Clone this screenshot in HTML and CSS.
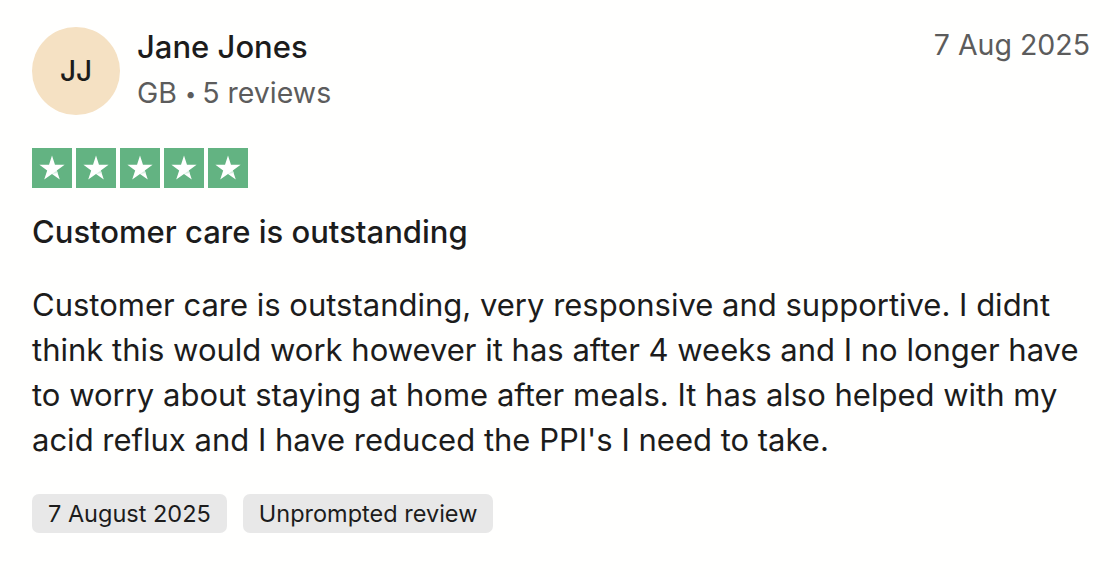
FILE: index.html
```html
<!DOCTYPE html>
<html lang="en">
<head>
<meta charset="utf-8">
<title>Review</title>
<link rel="stylesheet" href="styles.css">
</head>
<body>
<article class="review">
  <header class="head">
    <div class="avatar">JJ</div>
    <div class="who">
      <div class="name">Jane Jones</div>
      <div class="meta">GB<span class="dot">•</span>5 reviews</div>
    </div>
    <time class="date">7 Aug 2025</time>
  </header>
  <div class="stars">
    <span class="star"><svg viewBox="0 0 24 24"><path d="M12 3.2l2.1 6.5h6.8l-5.5 4 2.1 6.5L12 16.2l-5.5 4 2.1-6.5-5.5-4h6.8z"/><path class="notch" d="M15.4 13.7l0.6 1.9L12 16.2z"/></svg></span>
    <span class="star"><svg viewBox="0 0 24 24"><path d="M12 3.2l2.1 6.5h6.8l-5.5 4 2.1 6.5L12 16.2l-5.5 4 2.1-6.5-5.5-4h6.8z"/><path class="notch" d="M15.4 13.7l0.6 1.9L12 16.2z"/></svg></span>
    <span class="star"><svg viewBox="0 0 24 24"><path d="M12 3.2l2.1 6.5h6.8l-5.5 4 2.1 6.5L12 16.2l-5.5 4 2.1-6.5-5.5-4h6.8z"/><path class="notch" d="M15.4 13.7l0.6 1.9L12 16.2z"/></svg></span>
    <span class="star"><svg viewBox="0 0 24 24"><path d="M12 3.2l2.1 6.5h6.8l-5.5 4 2.1 6.5L12 16.2l-5.5 4 2.1-6.5-5.5-4h6.8z"/><path class="notch" d="M15.4 13.7l0.6 1.9L12 16.2z"/></svg></span>
    <span class="star"><svg viewBox="0 0 24 24"><path d="M12 3.2l2.1 6.5h6.8l-5.5 4 2.1 6.5L12 16.2l-5.5 4 2.1-6.5-5.5-4h6.8z"/><path class="notch" d="M15.4 13.7l0.6 1.9L12 16.2z"/></svg></span>
  </div>
  <h2 class="title">Customer care is outstanding</h2>
  <p class="body">Customer care is outstanding, very responsive and supportive. I didnt think this would work however it has after 4 weeks and I no longer have to worry about staying at home after meals. It has also helped with my acid reflux and I have reduced the PPI's I need to take.</p>
  <div class="tags">
    <span class="tag">7 August 2025</span>
    <span class="tag">Unprompted review</span>
  </div>
</article>
</body>
</html>
```
FILE: styles.css
```css
html, body {
  margin: 0;
  padding: 0;
  background: #fffffe;
}
body {
  font-family: Inter, "Noto Sans", sans-serif;
  color: #1c1c1c;
}
.review {
  padding: 27px 24px 0 32px;
}
.head {
  display: flex;
  align-items: flex-start;
}
.avatar {
  width: 88px;
  height: 88px;
  border-radius: 50%;
  background: #f5e1c3;
  display: flex;
  align-items: center;
  justify-content: center;
  font-size: 28px;
  font-weight: 500;
  flex: none;
}
.who {
  margin-left: 17px;
  flex: 1;
}
.name {
  font-size: 31px;
  font-weight: 500;
  line-height: 40px;
}
.meta {
  font-size: 28.5px;
  color: #5c5c5c;
  line-height: 36px;
  margin-top: 8px;
}
.dot {
  display: inline-block;
  font-size: 20px;
  margin: 0 6px 0 8px;
  vertical-align: 2px;
}
.date {
  font-size: 28.5px;
  color: #5c5c5c;
  line-height: 36px;
}
.stars {
  display: flex;
  gap: 4px;
  margin-top: 33px;
}
.star {
  width: 40px;
  height: 40px;
  background: #63b382;
  display: flex;
  align-items: center;
  justify-content: center;
}
.star svg {
  width: 34px;
  height: 34px;
  fill: #fff;
}
.star .notch {
  fill: #d8eee1;
}
.title {
  margin: 24px 0 0;
  font-size: 31px;
  font-weight: 500;
  line-height: 40px;
}
.body {
  margin: 30px 0 0;
  font-size: 31px;
  line-height: 45px;
  max-width: 1058px;
}
.tags {
  display: flex;
  gap: 16px;
  margin-top: 32px;
}
.tag {
  background: #e8e8e8;
  border-radius: 7px;
  font-size: 23.5px;
  line-height: 39px;
  padding: 0 16px;
}
```
